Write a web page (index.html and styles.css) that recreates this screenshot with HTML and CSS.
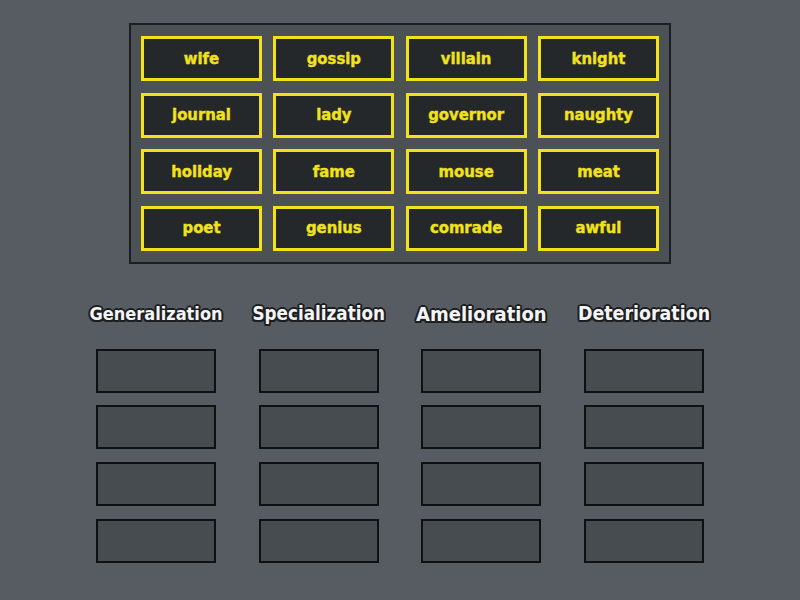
FILE: index.html
```html
<!DOCTYPE html>
<html>
<head>
<meta charset="utf-8">
<link rel="stylesheet" href="styles.css">
</head>
<body>
<div class="page">
  <div class="bank">
    <div class="tile">wife</div>
    <div class="tile">gossip</div>
    <div class="tile">villain</div>
    <div class="tile">knight</div>
    <div class="tile">journal</div>
    <div class="tile">lady</div>
    <div class="tile">governor</div>
    <div class="tile">naughty</div>
    <div class="tile">holiday</div>
    <div class="tile">fame</div>
    <div class="tile">mouse</div>
    <div class="tile">meat</div>
    <div class="tile">poet</div>
    <div class="tile">genius</div>
    <div class="tile">comrade</div>
    <div class="tile">awful</div>
  </div>
  <div class="groups">
    <div class="head"><span class="label s1">Generalization</span></div>
    <div class="head"><span class="label s2">Specialization</span></div>
    <div class="head"><span class="label s3">Amelioration</span></div>
    <div class="head"><span class="label s4">Deterioration</span></div>
    <div class="slot"></div><div class="slot"></div><div class="slot"></div><div class="slot"></div>
    <div class="slot"></div><div class="slot"></div><div class="slot"></div><div class="slot"></div>
    <div class="slot"></div><div class="slot"></div><div class="slot"></div><div class="slot"></div>
    <div class="slot"></div><div class="slot"></div><div class="slot"></div><div class="slot"></div>
  </div>
</div>
</body>
</html>
```
FILE: styles.css
```css
html, body {
  margin: 0;
  padding: 0;
  background: #565c62;
  width: 800px;
  height: 600px;
  overflow: hidden;
}
.page {
  padding-top: 23px;
  font-family: "DejaVu Sans Condensed", "Liberation Sans", sans-serif;
  font-weight: bold;
}
.bank {
  box-sizing: border-box;
  width: 542px;
  margin: 0 auto;
  border: 2px solid #1c1e20;
  background: #4c5156;
  padding: 11px 10px;
  display: grid;
  grid-template-columns: repeat(4, 1fr);
  column-gap: 11.33px;
  row-gap: 11.67px;
}
.tile {
  box-sizing: border-box;
  height: 45px;
  border: 3px solid #f2e21c;
  background: #25282b;
  color: #f2e21c;
  font-size: 16.5px;
  -webkit-text-stroke: 0.4px #f2e21c;
  display: flex;
  align-items: center;
  justify-content: center;
  padding-bottom: 1px;
}
.groups {
  width: 608px;
  margin: 36px auto 0;
  display: grid;
  grid-template-columns: repeat(4, 120px);
  column-gap: 42.67px;
  row-gap: 12.67px;
}
.head {
  height: 28px;
  display: flex;
  justify-content: center;
  align-items: center;
  margin-bottom: 8px;
}
.label {
  white-space: nowrap;
  color: #f4f4f4;
  font-size: 18px;
  text-shadow:
    -1.5px -1.5px 0 #1c1e20, 1.5px -1.5px 0 #1c1e20,
    -1.5px 1.5px 0 #1c1e20, 1.5px 1.5px 0 #1c1e20,
    0 -2px 0 #1c1e20, 0 2px 0 #1c1e20,
    -2px 0 0 #1c1e20, 2px 0 0 #1c1e20;
}
.s2 { font-size: 18.7px; }
.s3 { font-size: 20px; }
.s4 { font-size: 19.4px; }
.slot {
  box-sizing: border-box;
  height: 44px;
  border: 2px solid #0e1011;
  background: #464c50;
}
```
